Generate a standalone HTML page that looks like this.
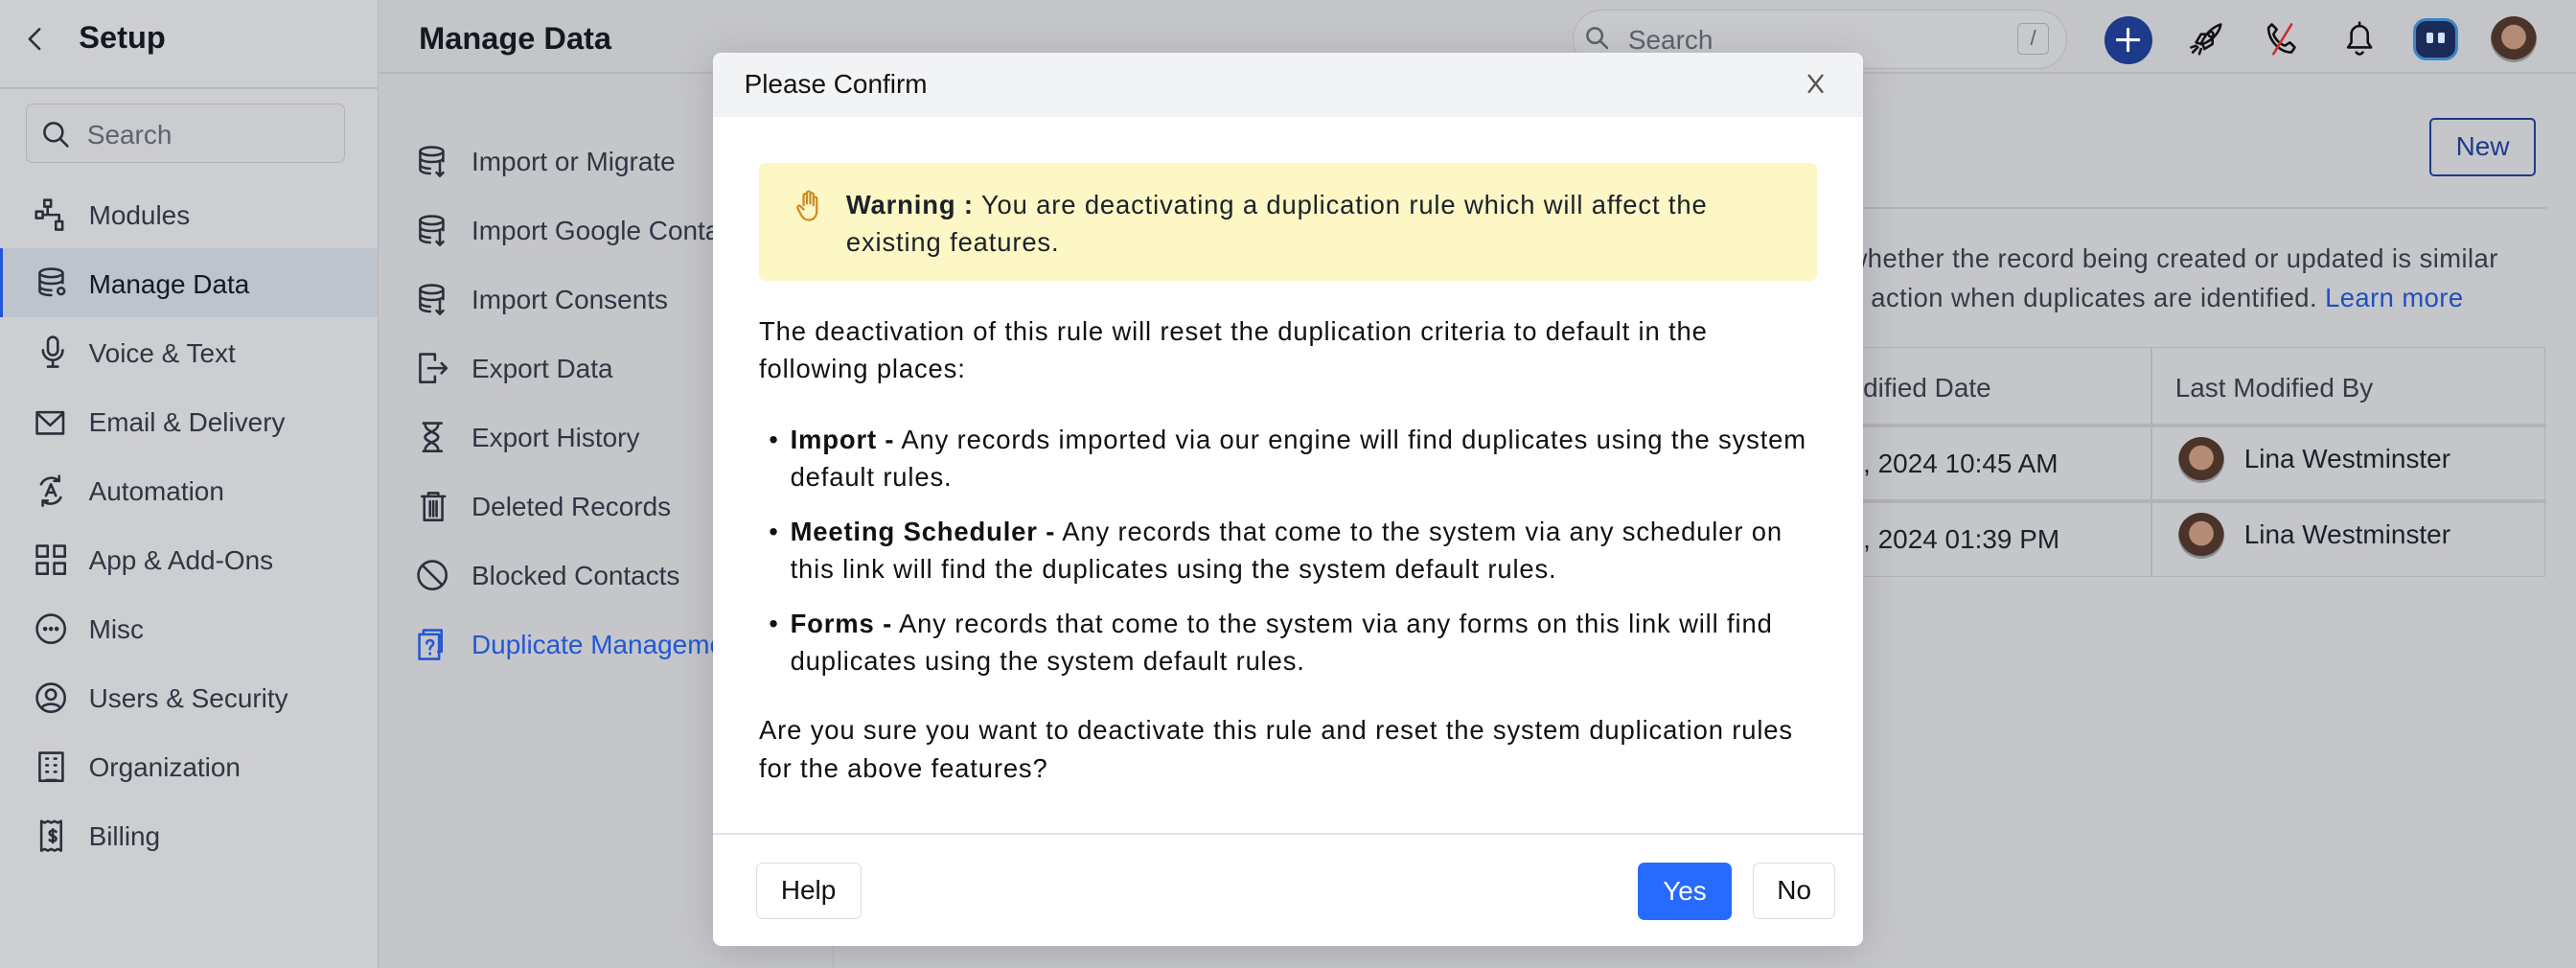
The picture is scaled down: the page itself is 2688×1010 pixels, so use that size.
<!DOCTYPE html>
<html><head><meta charset="utf-8"><style>
html,body{margin:0;padding:0;width:2688px;height:1010px;overflow:hidden;}
#z{zoom:1.71429;width:1568px;height:590px;position:relative;background:#c5c6ca;font-family:"Liberation Sans",Arial,sans-serif;color:#2a303b;}
.a{position:absolute;white-space:nowrap;}
svg{position:absolute;fill:none;stroke:#2a303b;stroke-width:1.5;stroke-linecap:round;stroke-linejoin:round;}
.sb{left:0;top:0;width:230px;height:590px;background:#cdced2;border-right:1px solid #b8b9be;}
.it{font-size:16.3px;color:#2f3643;}
.t{font-size:16px;line-height:23px;letter-spacing:0.5px}
</style></head><body><div id="z">
<div class="a sb"></div>
<div class="a" style="left:0;top:53px;width:230px;height:1px;background:#b8b9be"></div>
<svg style="left:14px;top:16px" width="16" height="16" viewBox="0 0 16 16"><path d="M10 2L4 8l6 6"/></svg>
<div class="a" style="left:48px;top:12px;font-size:19px;font-weight:bold;color:#14181f">Setup</div>
<div class="a" style="left:16px;top:63px;width:193px;height:35px;border:1px solid #b1b3b8;border-radius:4px;background:#cbccd0"></div>
<svg style="left:25px;top:73px" width="18" height="18" viewBox="0 0 18 18"><circle cx="7.5" cy="7.5" r="5.5"/><path d="M11.5 11.5l4.5 4.5"/></svg>
<div class="a" style="left:53px;top:73px;font-size:16.3px;color:#5d626c">Search</div>
<div class="a" style="left:0;top:151px;width:230px;height:42px;background:#bec4cd;border-left:2px solid #2057d6;box-sizing:border-box"></div>
<div class="a it" style="left:54px;top:122px">Modules</div>
<div class="a it" style="left:54px;top:164px;color:#14181f">Manage Data</div>
<div class="a it" style="left:54px;top:206px">Voice &amp; Text</div>
<div class="a it" style="left:54px;top:248px">Email &amp; Delivery</div>
<div class="a it" style="left:54px;top:290px">Automation</div>
<div class="a it" style="left:54px;top:332px">App &amp; Add-Ons</div>
<div class="a it" style="left:54px;top:374px">Misc</div>
<div class="a it" style="left:54px;top:416px">Users &amp; Security</div>
<div class="a it" style="left:54px;top:458px">Organization</div>
<div class="a it" style="left:54px;top:500px">Billing</div>
<svg style="left:21px;top:121px" width="20" height="20" viewBox="0 0 20 20"><rect x="6" y="1" width="4" height="4"/><rect x="1" y="8" width="4" height="4"/><rect x="13" y="14" width="4" height="5"/><path d="M8 5v5H5M8 10h7v4"/></svg>
<svg style="left:22px;top:162px" width="20" height="20" viewBox="0 0 20 20"><ellipse cx="9" cy="4" rx="7" ry="2.5"/><path d="M2 4v11c0 1.5 3 2.5 7 2.5M16 4v6M2 8c0 1.5 3 2.5 7 2.5s7-1 7-2.5M2 12c0 1.5 3 2.5 7 2.5"/><circle cx="15" cy="15" r="2"/></svg>
<svg style="left:22px;top:204px" width="20" height="20" viewBox="0 0 20 20"><rect x="7" y="1" width="6" height="11" rx="3"/><path d="M4 9a6 6 0 0012 0M10 15v4M7 19h6"/></svg>
<svg style="left:21px;top:248px" width="20" height="20" viewBox="0 0 20 20"><rect x="1.5" y="3" width="16" height="13"/><path d="M2 4l7.5 7L17 4"/></svg>
<svg style="left:21px;top:289px" width="20" height="20" viewBox="0 0 20 20"><path d="M4 6a7 7 0 0111-2M16 14a7 7 0 01-11 2M15 1v3h-3M5 19v-3h3M7 13l3-7 3 7M8 11h4"/></svg>
<svg style="left:21px;top:331px" width="20" height="20" viewBox="0 0 20 20"><rect x="1.5" y="1.5" width="6.5" height="6.5"/><rect x="12" y="1.5" width="6.5" height="6.5"/><rect x="1.5" y="12" width="6.5" height="6.5"/><rect x="12" y="12" width="6.5" height="6.5"/></svg>
<svg style="left:21px;top:373px" width="20" height="20" viewBox="0 0 20 20"><circle cx="10" cy="10" r="8.5"/><circle cx="6.5" cy="10" r=".6" fill="#2a303b"/><circle cx="10" cy="10" r=".6" fill="#2a303b"/><circle cx="13.5" cy="10" r=".6" fill="#2a303b"/></svg>
<svg style="left:21px;top:415px" width="20" height="20" viewBox="0 0 20 20"><circle cx="10" cy="10" r="8.5"/><circle cx="10" cy="8" r="3"/><path d="M4.5 16c1.5-3 9.5-3 11 0"/></svg>
<svg style="left:22px;top:457px" width="20" height="20" viewBox="0 0 20 20"><rect x="2" y="1.5" width="14" height="17"/><path d="M6 5h1M11 5h1M6 9h1M11 9h1M6 13h1M11 13h1M6 18h6"/></svg>
<svg style="left:22px;top:499px" width="20" height="20" viewBox="0 0 20 20"><path d="M3 1v18l2-1 2 1 2-1 2 1 2-1 2 1V1l-2 1-2-1-2 1-2-1-2 1zM10 6v8M12 7.5c-1-1-4-1-4 .8 0 2 4 1.5 4 3.4 0 1.8-3 1.8-4 .8"/></svg>
<div class="a" style="left:231px;top:0;width:1337px;height:53px;background:#c4c5c9"></div>
<div class="a" style="left:231px;top:44px;width:1337px;height:1px;background:#b6b7bc"></div>
<div class="a" style="left:255px;top:13px;font-size:19px;font-weight:bold;color:#14181f">Manage Data</div>
<div class="a" style="left:507px;top:60px;width:1043px;height:540px;border-left:1px solid #b6b7bc"></div>
<div class="a it" style="left:287px;top:89px">Import or Migrate</div>
<div class="a it" style="left:287px;top:131px">Import Google Contacts</div>
<div class="a it" style="left:287px;top:173px">Import Consents</div>
<div class="a it" style="left:287px;top:215px">Export Data</div>
<div class="a it" style="left:287px;top:257px">Export History</div>
<div class="a it" style="left:287px;top:299px">Deleted Records</div>
<div class="a it" style="left:287px;top:341px">Blocked Contacts</div>
<div class="a it" style="left:287px;top:383px;color:#2357d4">Duplicate Management</div>
<svg style="left:254px;top:88px" width="20" height="20" viewBox="0 0 20 20"><ellipse cx="9" cy="4" rx="7" ry="2.5"/><path d="M2 4v11c0 1.5 3 2.5 6 2.5M16 4v6M2 8c0 1.5 3 2.5 7 2.5s7-1 7-2.5M2 12c0 1.5 3 2.5 6 2.5M14 11v8M12 17l2 2 2-2"/></svg>
<svg style="left:254px;top:130px" width="20" height="20" viewBox="0 0 20 20"><ellipse cx="9" cy="4" rx="7" ry="2.5"/><path d="M2 4v11c0 1.5 3 2.5 6 2.5M16 4v6M2 8c0 1.5 3 2.5 7 2.5s7-1 7-2.5M2 12c0 1.5 3 2.5 6 2.5M14 11v8M12 17l2 2 2-2"/></svg>
<svg style="left:254px;top:172px" width="20" height="20" viewBox="0 0 20 20"><ellipse cx="9" cy="4" rx="7" ry="2.5"/><path d="M2 4v11c0 1.5 3 2.5 6 2.5M16 4v6M2 8c0 1.5 3 2.5 7 2.5s7-1 7-2.5M2 12c0 1.5 3 2.5 6 2.5M14 11v8M12 17l2 2 2-2"/></svg>
<svg style="left:254px;top:214px" width="20" height="20" viewBox="0 0 20 20"><path d="M11 5V1.5H2v17h9V15M7 10h11M15 7l3 3-3 3"/></svg>
<svg style="left:254px;top:256px" width="20" height="20" viewBox="0 0 20 20"><path d="M4 1.5h11M4 18.5h11M5 2c0 5 8 5 8 8s-8 3-8 8M13 2c0 5-8 5-8 8s8 3 8 8"/></svg>
<svg style="left:254px;top:298px" width="20" height="20" viewBox="0 0 20 20"><path d="M3 4h14M7 4V2h6v2M4.5 4v14.5h11V4M8 7v9M10 7v9M12 7v9"/></svg>
<svg style="left:253px;top:340px" width="20" height="20" viewBox="0 0 20 20"><circle cx="10" cy="10" r="8.5"/><path d="M4 4l12 12"/></svg>
<svg style="left:254px;top:382px;stroke:#2357d4" width="20" height="20" viewBox="0 0 20 20"><path d="M4 4V1.5h11v13h-2"/><rect x="1.5" y="4" width="12" height="15"/><path d="M6 9.5c0-2.5 4-2.5 4 0 0 1.5-2 1.5-2 3.5M8 15.5v.5"/></svg>
<div class="a" style="left:957px;top:6px;width:300px;height:35px;border:1px solid #b2b3b8;border-radius:19px;background:#c8c9cd"></div>
<svg style="left:964px;top:15px;stroke:#5d626c" width="16" height="16" viewBox="0 0 16 16"><circle cx="6.5" cy="6.5" r="4.5"/><path d="M10 10l4 4"/></svg>
<div class="a" style="left:991px;top:15px;font-size:16.3px;color:#5d626c">Search</div>
<div class="a" style="left:1228px;top:14px;width:18px;height:18px;border:1px solid #9fa1a7;border-radius:3px;font-size:13px;text-align:center;line-height:18px;color:#5d626c">/</div>
<div class="a" style="left:1281px;top:10px;width:29px;height:29px;border-radius:50%;background:#1e3a8a"></div>
<svg style="left:1287px;top:16px;stroke:#fff;stroke-width:1.8" width="17" height="17" viewBox="0 0 17 17"><path d="M8.5 2v13M2 8.5h13"/></svg>
<svg style="left:1332px;top:13px;stroke:#111" width="22" height="22" viewBox="0 0 22 22"><path d="M8 14c2-5 6-10 12-12-1 6-6 10-11 12zM8 14l-3-1 3-5h4M9 14l1 3 5-3v-4M6 16l-3 3M5 15l-3 1M8 17l-1 3"/><circle cx="14" cy="8" r="1.5"/></svg>
<svg style="left:1378px;top:13px;stroke:#111" width="22" height="22" viewBox="0 0 22 22"><path d="M5 2l3 3-2 3c1 3 4 6 7 7l3-2 3 3-2 3C10 19 3 12 3 4z"/><path d="M17 2L6 20" style="stroke:#c9302c"/></svg>
<svg style="left:1426px;top:13px;stroke:#111" width="20" height="22" viewBox="0 0 20 22"><path d="M3 16h14l-2-3V8a5 5 0 00-10 0v5zM8 19c1 1.5 3 1.5 4 0M10 1v2"/></svg>
<div class="a" style="left:1469px;top:11px;width:27px;height:26px;border-radius:8px;background:#1b2b57;border:2px solid #3a86c8;box-sizing:border-box"></div>
<div class="a" style="left:1477px;top:20px;width:4px;height:6px;border-radius:1px;background:#cfe2ff"></div>
<div class="a" style="left:1484px;top:20px;width:4px;height:6px;border-radius:1px;background:#cfe2ff"></div>
<div class="a" style="left:1516px;top:10px;width:28px;height:28px;border-radius:50%;background:radial-gradient(circle at 50% 45%,#b48b74 0 35%,#4a3328 37% 65%,#8d8f92 67%)"></div>
<div class="a" style="left:1479px;top:72px;width:62px;height:33px;border:1.5px solid #1e3a8a;border-radius:3px;font-size:16.3px;color:#1e3a8a;text-align:center;line-height:33px">New</div>
<div class="a" style="left:1130px;top:126px;width:420px;height:1px;background:#b2b3b8"></div>
<div class="a" style="left:1125px;top:148px;font-size:16px;letter-spacing:0.25px;color:#353b46">whether the record being created or updated is similar</div>
<div class="a" style="left:1125px;top:172px;font-size:16px;letter-spacing:0.25px;color:#353b46">e action when duplicates are identified. <span style="color:#1f4fc0">Learn more</span></div>
<div class="a" style="left:1130px;top:211px;width:419px;height:139px;border:1px solid #b2b3b8;border-left:none"></div>
<div class="a" style="left:1130px;top:258px;width:420px;height:2px;background:#b2b3b8"></div>
<div class="a" style="left:1130px;top:304px;width:420px;height:2px;background:#b2b3b8"></div>
<div class="a" style="left:1309px;top:211px;width:1px;height:140px;background:#b2b3b8"></div>
<div class="a" style="left:1125px;top:227px;font-size:16.3px;color:#353b46">odified Date</div>
<div class="a" style="left:1324px;top:227px;font-size:16.3px;color:#353b46">Last Modified By</div>
<div class="a" style="left:1125px;top:273px;font-size:16.3px;color:#1c2129">4, 2024 10:45 AM</div>
<div class="a" style="left:1125px;top:319px;font-size:16.3px;color:#1c2129">4, 2024 01:39 PM</div>
<div class="a" style="left:1366px;top:270px;font-size:16.3px;color:#1c2129">Lina Westminster</div>
<div class="a" style="left:1366px;top:316px;font-size:16.3px;color:#1c2129">Lina Westminster</div>
<div class="a" style="left:1326px;top:266px;width:28px;height:28px;border-radius:50%;background:radial-gradient(circle at 50% 45%,#b48b74 0 35%,#4a3328 37% 65%,#8d8f92 67%)"></div>
<div class="a" style="left:1326px;top:312px;width:28px;height:28px;border-radius:50%;background:radial-gradient(circle at 50% 45%,#b48b74 0 35%,#4a3328 37% 65%,#8d8f92 67%)"></div>
<div class="a" style="left:434px;top:32px;width:700px;height:544px;background:#fff;border-radius:5px;overflow:hidden;color:#111;box-shadow:0 4px 24px rgba(0,0,0,.15)">
 <div class="a" style="left:0;top:0;width:700px;height:39px;background:#f2f3f5"></div>
 <div class="a" style="left:19px;top:10px;font-size:16.3px;color:#111">Please Confirm</div>
 <svg style="left:666px;top:13px;stroke:#555;stroke-width:1.4" width="10" height="12" viewBox="0 0 10 12"><path d="M1 1l8 10M9 1L1 11"/></svg>
 <div class="a" style="left:28px;top:67px;width:644px;height:72px;background:#fdf6c5;border-radius:4px"></div>
 <svg style="left:50px;top:83px;stroke:#d08a1e;stroke-width:1.3" width="16" height="20" viewBox="0 0 16 20"><path d="M5 10V4a1 1 0 012 0v5V2.5a1 1 0 012 0V9V3.5a1 1 0 012 0V10V6a1 1 0 012 0v7c0 4-2 6-5 6-2 0-3-1-4.5-3L1.5 12c-.7-1 .5-2.3 1.5-1.4L5 12.5"/></svg>
 <div class="a t" style="left:81px;top:81px;color:#1c2129"><b>Warning :</b> You are deactivating a duplication rule which will affect the<br>existing features.</div>
 <div class="a t" style="left:28px;top:158px">The deactivation of this rule will reset the duplication criteria to default in the<br>following places:</div>
 <div class="a t" style="left:34px;top:224px">•</div>
 <div class="a t" style="left:47px;top:224px"><b>Import -</b> Any records imported via our engine will find duplicates using the system<br>default rules.</div>
 <div class="a t" style="left:34px;top:280px">•</div>
 <div class="a t" style="left:47px;top:280px"><b>Meeting Scheduler -</b> Any records that come to the system via any scheduler on<br>this link will find the duplicates using the system default rules.</div>
 <div class="a t" style="left:34px;top:336px">•</div>
 <div class="a t" style="left:47px;top:336px"><b>Forms -</b> Any records that come to the system via any forms on this link will find<br>duplicates using the system default rules.</div>
 <div class="a t" style="left:28px;top:401px">Are you sure you want to deactivate this rule and reset the system duplication rules<br>for the above features?</div>
 <div class="a" style="left:0;top:475px;width:700px;height:1px;background:#e1e2e6"></div>
 <div class="a" style="left:26px;top:493px;width:63px;height:33px;border:1px solid #dcdde2;border-radius:4px;font-size:16.3px;text-align:center;line-height:33px">Help</div>
 <div class="a" style="left:563px;top:493px;width:57px;height:35px;background:#266bfd;border-radius:4px;font-size:16.3px;text-align:center;line-height:35px;color:#fff">Yes</div>
 <div class="a" style="left:633px;top:493px;width:49px;height:33px;border:1px solid #dcdde2;border-radius:4px;font-size:16.3px;text-align:center;line-height:33px">No</div>
</div>
</div></body></html>
